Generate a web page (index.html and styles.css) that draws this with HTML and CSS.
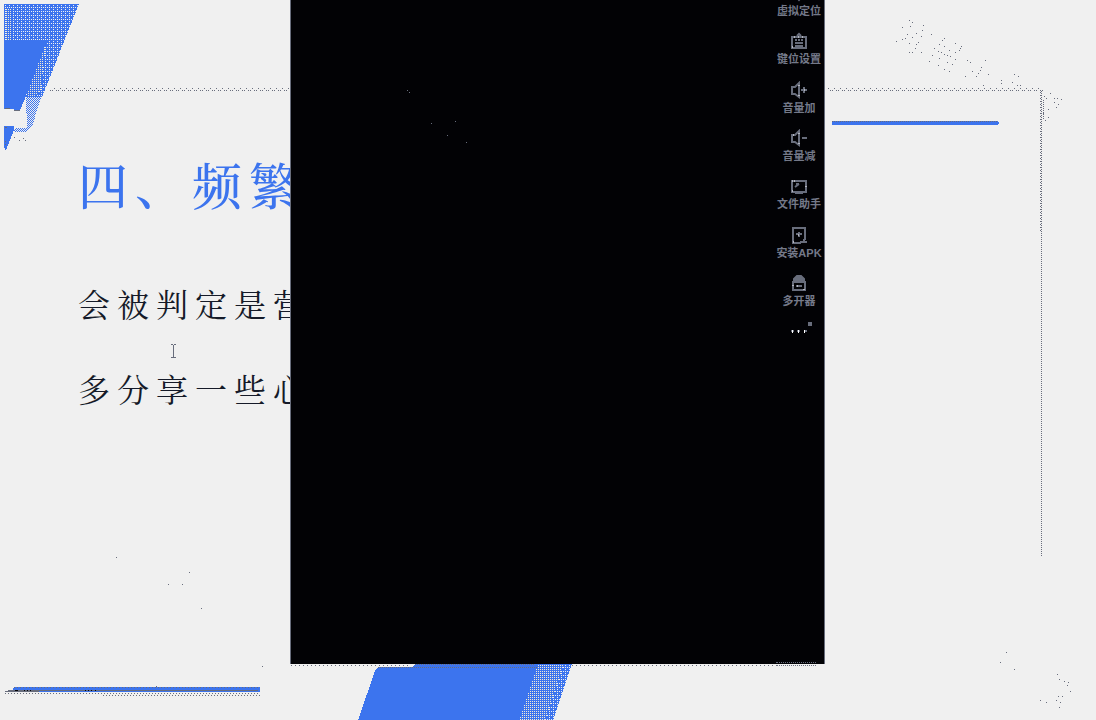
FILE: index.html
```html
<!DOCTYPE html>
<html lang="zh-CN">
<head>
<meta charset="utf-8">
<title>四、频繁</title>
<link rel="stylesheet" href="styles.css">
</head>
<body>
<main class="slide">
  <svg class="decor" viewBox="0 0 1096 720" preserveAspectRatio="xMinYMin slice" shape-rendering="crispEdges" aria-hidden="true">
    <defs>
      <pattern id="mesh" width="4" height="4" patternUnits="userSpaceOnUse"><path fill="#3c74ee" d="M0 0h4v4H0z"/><path fill="#f0f0f0" d="M1 1h1v1H1zM3 3h1v1H3zM1 3h1v1H1z"/></pattern>
      <pattern id="warm" width="2" height="2" patternUnits="userSpaceOnUse"><path fill="#3c74ee" d="M0 0h2v2H0z"/><path fill="#f3ead5" d="M0 1h1v1H0z"/></pattern>
      <pattern id="check" width="2" height="2" patternUnits="userSpaceOnUse"><path fill="#3c74ee" d="M0 0h1v1H0zM1 1h1v1H1z"/></pattern>
      <pattern id="dots" x="0" y="88" width="6" height="3" patternUnits="userSpaceOnUse"><path fill="#686d7c" d="M0 0h1v1H0zM2 2h1v1H2zM4 2h1v1H4z"/></pattern>
    </defs>
    <path fill="url(#mesh)" d="M4 4H79L42 97H26L40 41H4z"/>
    <path fill="#3c74ee" d="M4 4h75v1H4z"/>
    <path fill="url(#warm)" d="M6 8h6v32H6zM46 42l-5 47-6 8H26z"/>
    <path fill="url(#check)" d="M26 97h15l-9 30-6 5H14l1-4h12z"/>
    <path fill="#3c74ee" d="M4 41h42l-3 10-19 50-4 9h-6v-1H4zM4 126h10v4l-8 20H5l-1-4z"/>
    <path stroke="#686d7c" d="M5 108.500h5M14 110.500h6M5 127.500h2M5 141.500h1M5 144.500h1M14 137.500h1M19 140.500h1M23 138.500h1M25 140.500h1"/>
    <path fill="url(#dots)" d="M49 88h242v3H49zM828 88h215v3H828z"/>
    <path stroke="#686d7c" stroke-dasharray="1 1" d="M1041.500 91v465M1043.500 100v20"/>
    <path stroke="#686d7c" stroke-dasharray="1 2" d="M1040.500 92v140"/>
    <path fill="#3c74ee" d="M832 121h166v1h1v2h-1v1H832z"/>
    <path stroke="#686d7c" stroke-dasharray="1 1" d="M832 121.500h166"/>
    <g transform="translate(820 0) scale(.33333)" stroke="#686d7c" stroke-width="3">
      <path d="M267 61h3M276 67h3M270 79h3M246 82h3M309 76h3M306 91h3M261 103h3M288 100h3M303 109h3M333 103h3M276 112h3M246 118h3M255 115h3M228 124h3M267 130h3M288 133h3M294 127h3M285 145h3M267 157h3M276 157h3M303 157h3M372 115h3M366 121h3M357 133h3M342 145h3M372 139h3M405 130h3M423 139h3M420 145h3M417 151h3M354 154h3M363 157h3M387 151h3M405 157h3M372 163h3M336 166h3M381 166h3M390 169h3M357 175h3M405 178h3M327 184h3M381 187h3M396 193h3M354 196h3M372 208h3M387 214h3M441 181h3M450 187h3M495 181h3M483 202h3M480 211h3M456 214h3M474 220h3M435 229h3M468 229h3M504 223h3M582 223h3M594 229h3M543 241h3M543 250h3M576 247h3M489 256h3M591 256h3M600 256h3M690 280h3M678 295h3M702 295h3M711 295h3M723 298h3M702 307h3M714 313h3M708 322h3M684 328h3M684 352h3M675 361h3M669 340h3M672 289h3"/>
    </g>
    <path stroke="#686d7c" d="M116 557.500h1M189 572.500h1M168 584.500h1M182 584.500h1M201 608.500h1M262 666.500h1M1006 652.500h1M1000 662.500h1M1014 669.500h1M1057 674.500h1M1059 679.500h1M1064 681.500h1M1068 682.500h1M1067 685.500h1M1070 691.500h1M1058 696.500h1M1062 696.500h1M1040 700.500h1M1046 702.500h1M1056 700.500h1M1060 702.500h1M1059 707.500h1"/>
    <path fill="#3c74ee" d="M14 687h246v5H13v-4z"/>
    <path stroke="#686d7c" d="M8 690.500h250M5 691.500h34M156 686.500h1"/>
    <path stroke="#686d7c" stroke-dasharray="1 2" d="M14 687.500h246M5 693.500h255M103 695.500h157"/>
    <path stroke="#020205" d="M15 690.500h3M24 690.500h1M27 690.500h1M30 690.500h1M85 690.500h1M88 690.500h1M91 690.500h1M95 690.500h1"/>
    <path stroke="#686d7c" stroke-dasharray="1 3" d="M291 665.500h120M572 665.500h205"/>
    <path stroke="#686d7c" stroke-dasharray="1 1" d="M777 665.500h40"/>
    <path fill="url(#warm)" d="M538 664h34l-19 56h-36z"/>
    <path fill="url(#mesh)" d="M564 664h8l-19 56h-8z"/>
    <path fill="#3c74ee" d="M378 667h34l4-3h122l-19 56H358l17-49z"/>
    <path stroke="#686d7c" stroke-dasharray="1 1" d="M378 667.500h160M415 664.500h120"/>
    <path fill="none" stroke="#686d7c" d="M171 344.500h2M174 344.500h2M173.500 345v12M171 357.500h5"/>
  </svg>
  <h1 class="title">四、频繁</h1>
  <p class="line">会被判定是营</p>
  <p class="line">多分享一些心</p>
</main>

<aside class="emulator">
  <svg class="specks" viewBox="0 0 60 54" shape-rendering="crispEdges" aria-hidden="true"><path stroke="#686d7c" d="M0 .5h1M2 2.500h1M24 33.500h1M48 31.500h1M40 45.500h1M59 52.500h1"/></svg>
  <nav class="tools">
    <div class="list">
      <button class="tool"><svg class="icon" viewBox="0 0 20 20"><path d="M10 16C6 11 5 9 5 7a5 5 0 0 1 10 0c0 2-1 4-5 9z"/></svg><span>虚拟定位</span></button>
      <button class="tool"><svg class="icon" viewBox="0 0 20 20"><path d="M3 5h14v11H3zM6 8h2M9 8h2M12 8h2M6 11h8M6 14h8M8 4l2-2 2 2"/><path class="glint" d="M5 5h1M9 5h1M13 5h1M3 15h1"/></svg><span>键位设置</span></button>
      <button class="tool"><svg class="icon" viewBox="0 0 20 20"><path d="M10 2v14l-4-3H3V6h3zM12 9h6M15 6v6"/><path class="glint" d="M10 4v1M10 14v1M15 9h1"/></svg><span>音量加</span></button>
      <button class="tool"><svg class="icon" viewBox="0 0 20 20"><path d="M10 2v14l-4-3H3V6h3zM13 9h5"/><path class="glint" d="M10 4v1M10 14v1M4 6h1"/></svg><span>音量减</span></button>
      <button class="tool"><svg class="icon" viewBox="0 0 20 20"><path d="M3 4h14v11H3zM6 10l4-3M7 7h3M6 16h8"/><path class="glint" d="M3 4h1M5 4h1M3 14h1M17 9v1"/></svg><span>文件助手</span></button>
      <button class="tool"><svg class="icon" viewBox="0 0 20 20"><path d="M4 2h12v12M4 1v16h8M10 6v5M7 8h6M11 16h7M15 13v4"/><path class="glint" d="M9 9h1M4 16h1"/></svg><span>安装APK</span></button>
      <button class="tool"><svg class="icon" viewBox="0 0 20 20"><path class="solid" d="M5 8V5l3-3h4l3 3v3z"/><path d="M4 8h12v8H4zM7 12h6"/><path class="glint" d="M4 11v1M8 12h1M15 15v1"/></svg><span>多开器</span></button>
    </div>
    <button class="more" aria-label="更多"><svg class="moreicon" viewBox="0 0 40 16" shape-rendering="crispEdges"><path fill="#686d7c" d="M12 11h3v2h-3zM18 11h3v2h-3zM25 11h3v2h-3zM29 3h4v4h-4z"/><path fill="#fff" d="M13 11h1v3h-1zM19 11h1v3h-1zM25 11h1v3h-1z"/></svg></button>
  </nav>
  <span class="edge"></span>
</aside>
</body>
</html>
```
FILE: styles.css
```css
* {
  box-sizing: border-box;
}

body {
  margin: 0;
  background: #f0f0f0;
  font-family: "Liberation Serif", "Noto Serif CJK SC", "Noto Sans CJK SC", serif;
}

.slide {
  position: relative;
  min-height: 100vh;
  padding: 150px 78px 0;
  overflow: hidden;
}

.decor {
  position: absolute;
  inset: 0;
  width: 100%;
  height: 100%;
}

.title {
  margin: 0 0 56px;
  color: #3c74ee;
  font-size: 50px;
  font-weight: 500;
  line-height: 76px;
  letter-spacing: 7px;
}

.line {
  margin: 0 0 37px;
  color: #151a28;
  font-size: 32px;
  font-weight: 400;
  line-height: 48px;
  letter-spacing: 7px;
}

.title,
.line {
  position: relative;
  white-space: nowrap;
}

.emulator {
  position: absolute;
  top: 0;
  left: 290px;
  display: flex;
  justify-content: flex-end;
  width: 535px;
  height: 664px;
  overflow: hidden;
  background: #020205;
  border-left: 1px solid #686d7c;
  border-right: 1px solid #686d7c;
}

.specks {
  position: absolute;
  top: 90px;
  left: 116px;
  width: 60px;
  height: 54px;
}

.tools {
  display: flex;
  flex-direction: column;
  width: 50px;
  margin-top: -30px;
}

.list {
  display: flex;
  flex-direction: column;
  justify-content: space-between;
  height: 338px;
}

.tool,
.more {
  display: flex;
  flex-direction: column;
  align-items: center;
  padding: 0;
  border: 0;
  background: none;
  color: #747989;
}

.tool {
  height: 48px;
  padding-top: 14px;
  font-family: "Liberation Sans", "Noto Sans CJK SC", sans-serif;
  font-size: 11px;
  font-weight: 700;
  line-height: 14px;
  white-space: nowrap;
}

.icon {
  flex: none;
  width: 20px;
  height: 20px;
  fill: none;
  stroke: #686d7c;
  stroke-width: 2;
}

.icon .solid {
  fill: #686d7c;
}

.icon .glint {
  stroke: #fff;
  stroke-width: 1;
}

.more {
  padding-top: 11px;
}

.moreicon {
  width: 40px;
  height: 16px;
}

.edge {
  position: absolute;
  right: 8px;
  bottom: 1px;
  width: 40px;
  border-top: 1px dotted #686d7c;
}
```
